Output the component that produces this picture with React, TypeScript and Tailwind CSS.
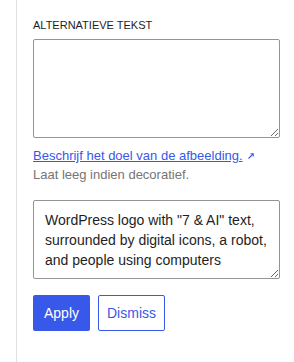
import React from "react";

export default function App() {
  const font = { fontFamily: '"Segoe UI", "Liberation Sans", Arial, sans-serif' };
  return (
    <div className="w-[294px] h-[362px] bg-white flex" style={font}>
      <div className="w-[16px] shrink-0" />
      <div className="w-px bg-[#e0e0e0] shrink-0" />
      <div className="flex flex-col pl-[16px] pt-[18px] w-[264px]">
        <label className="text-[11px] leading-[14px] uppercase text-[#1e1e1e]">Alternatieve tekst</label>
        <textarea
          className="mt-[7px] w-[247px] h-[99px] border border-[#949494] rounded-[2px] block"
          style={font}
        />
        <div className="mt-[10px] text-[13px] leading-[16px]">
          <a href="#" className="text-[#3858e9] underline">Beschrijf het doel van de afbeelding.</a>
          <svg className="inline-block ml-[4px] align-[0px]" width="8" height="8" viewBox="0 0 8 8">
            <path d="M1.5 6.5 L6 2" stroke="#3858e9" strokeWidth="1.1" fill="none" />
            <path d="M3.5 1.8 H6.2 V4.5" stroke="#3858e9" strokeWidth="1.1" fill="none" />
          </svg>
        </div>
        <div className="mt-[3px] text-[13px] leading-[16px] text-[#757575]">Laat leeg indien decoratief.</div>
        <textarea
          className="mt-[17px] w-[247px] h-[79px] border border-[#949494] rounded-[2px] block px-[11px] py-[9px] text-[14px] leading-[20px] text-[#1e1e1e] resize-y"
          style={font}
          defaultValue={'WordPress logo with "7 & AI" text, surrounded by digital icons, a robot, and people using computers'}
        />
        <div className="flex gap-[8px] mt-[16px]">
          <button className="h-[36px] w-[57px] bg-[#3858e9] text-white text-[14px] rounded-[2px]">Apply</button>
          <button className="h-[36px] w-[67px] border border-[#3858e9] text-[#3858e9] text-[14px] rounded-[2px] bg-white">Dismiss</button>
        </div>
      </div>
    </div>
  );
}
